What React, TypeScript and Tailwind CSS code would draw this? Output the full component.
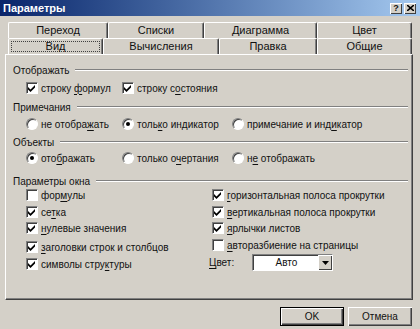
import React from "react";

const font = { fontFamily: '"Liberation Sans", Arial, sans-serif' };

function Label({ text, u }: { text: string; u?: number }) {
  if (u === undefined) return <span>{text}</span>;
  return (
    <span className="whitespace-nowrap">
      {text.slice(0, u)}
      <span className="underline underline-offset-[2px]">{text[u]}</span>
      {text.slice(u + 1)}
    </span>
  );
}

function Check({ on, text, u, className = "" }: { on?: boolean; text: string; u?: number; className?: string }) {
  return (
    <div className={`flex items-center gap-[3px] ${className}`}>
      <div className="w-[12px] h-[12px] shrink-0 border border-t-[#808080] border-l-[#808080] border-r-white border-b-white bg-white shadow-[inset_1px_1px_0_#404040] flex items-center justify-center">
        {on && (
          <svg width="8" height="8" viewBox="0 0 8 8">
            <path d="M0 3 L2.5 5.5 L7 1 L7 3.5 L2.5 8 L0 5.5 Z" fill="#000" />
          </svg>
        )}
      </div>
      <Label text={text} u={u} />
    </div>
  );
}

function Radio({ on, text, u, className = "" }: { on?: boolean; text: string; u?: number; className?: string }) {
  return (
    <div className={`flex items-center gap-[3px] ${className}`}>
      <div className="w-[12px] h-[12px] shrink-0 rounded-full border border-t-[#808080] border-l-[#808080] border-r-white border-b-white bg-white shadow-[inset_1px_1px_0_#404040] flex items-center justify-center">
        {on && <div className="w-[4px] h-[4px] rounded-full bg-black" />}
      </div>
      <Label text={text} u={u} />
    </div>
  );
}

function Heading({ text, className = "" }: { text: string; className?: string }) {
  return (
    <div className={`flex items-center h-[14px] pl-[7px] pr-[4px] ${className}`}>
      <span>{text}</span>
      <div className="flex-1 h-0 ml-[6px] border-t border-t-[#808080] border-b border-b-white" />
    </div>
  );
}

function Tab({ text, w, selected }: { text: string; w: string; selected?: boolean }) {
  return (
    <div
      className={`${w} h-full flex items-center justify-center rounded-t-[2px] border-t border-l border-t-white border-l-white border-r border-r-[#404040] shadow-[inset_-1px_0_0_#808080] ${selected ? "p-[2px]" : ""}`}
    >
      {selected ? (
        <div className="w-full h-full flex items-center justify-center border border-dotted border-[#404040]">{text}</div>
      ) : (
        text
      )}
    </div>
  );
}

function Button({ text, primary }: { text: string; primary?: boolean }) {
  return (
    <div
      className={`w-[64px] h-[19px] flex items-center justify-center ${
        primary
          ? "border border-black shadow-[inset_1px_1px_0_#fff,inset_-1px_-1px_0_#404040,inset_-2px_-2px_0_#808080]"
          : "shadow-[inset_1px_1px_0_#fff,inset_-1px_-1px_0_#404040,inset_-2px_-2px_0_#808080]"
      }`}
    >
      {text}
    </div>
  );
}

export default function App() {
  return (
    <div className="w-[420px] h-[329px] bg-[#d4d0c8] text-[10px] text-[#111] overflow-hidden" style={font}>
      {/* Title bar */}
      <div className="h-[16px] flex items-center justify-between pl-[3px] pr-[4px] bg-gradient-to-r from-[#0a246a] to-[#a6caf0]">
        <span className="text-white font-bold text-[11px]">Параметры</span>
        <div className="flex gap-[2px]">
          <div className="w-[12px] h-[11px] bg-[#d4d0c8] flex items-center justify-center text-[9px] font-bold leading-none shadow-[inset_1px_1px_0_#fff,inset_-1px_-1px_0_#404040]">
            ?
          </div>
          <div className="w-[12px] h-[11px] bg-[#d4d0c8] flex items-center justify-center shadow-[inset_1px_1px_0_#fff,inset_-1px_-1px_0_#404040]">
            <svg width="7" height="6" viewBox="0 0 7 6">
              <path d="M0 0 L7 6 M7 0 L0 6" stroke="#000" strokeWidth="1.6" />
            </svg>
          </div>
        </div>
      </div>

      {/* Tabs */}
      <div className="mt-[6px] ml-[8px] text-[11px]">
        <div className="flex h-[16px]">
          <Tab text="Переход" w="w-[100px]" />
          <Tab text="Списки" w="w-[96px]" />
          <Tab text="Диаграмма" w="w-[113px]" />
          <Tab text="Цвет" w="w-[95px]" />
        </div>
        <div className="flex h-[16px]">
          <Tab text="Вид" w="w-[95px]" selected />
          <Tab text="Вычисления" w="w-[116px]" />
          <Tab text="Правка" w="w-[98px]" />
          <Tab text="Общие" w="w-[95px]" />
        </div>
      </div>

      {/* Panel */}
      <div className="ml-[5px] w-[408px] h-[246px] border-t border-l border-t-white border-l-white border-r border-b border-r-[#404040] border-b-[#404040] shadow-[inset_-1px_-1px_0_#808080] pt-[8px]">
        <Heading text="Отображать" />
        <div className="flex h-[14px] mt-[4px] pl-[20px]">
          <Check on text="строку формул" u={7} className="w-[96px]" />
          <Check on text="строку состояния" u={8} />
        </div>

        <Heading text="Примечания" className="mt-[5px]" />
        <div className="flex h-[14px] mt-[3px] pl-[20px]">
          <Radio text="не отображать" u={9} className="w-[96px]" />
          <Radio on text="только индикатор" u={4} className="w-[110px]" />
          <Radio text="примечание и индикатор" u={16} />
        </div>

        <Heading text="Объекты" className="mt-[4px]" />
        <div className="flex h-[14px] mt-[2px] pl-[20px]">
          <Radio on text="отображать" u={3} className="w-[96px]" />
          <Radio text="только очертания" u={8} className="w-[110px]" />
          <Radio text="не отображать" u={1} />
        </div>

        <Heading text="Параметры окна" className="mt-[9px]" />
        <div className="grid grid-cols-[186px_1fr] pl-[20px]">
          <div className="flex flex-col">
            <Check text="формулы" u={3} className="h-[14px]" />
            <Check on text="сетка" u={2} className="h-[14px] mt-[3px]" />
            <Check on text="нулевые значения" u={0} className="h-[14px] mt-[2px]" />
            <Check on text="заголовки строк и столбцов" u={0} className="h-[14px] mt-[5px]" />
            <Check on text="символы структуры" u={12} className="h-[14px] mt-[3px]" />
          </div>
          <div className="flex flex-col">
            <Check on text="горизонтальная полоса прокрутки" u={0} className="h-[14px]" />
            <Check on text="вертикальная полоса прокрутки" u={0} className="h-[14px] mt-[3px]" />
            <Check on text="ярлычки листов" u={0} className="h-[14px] mt-[2px]" />
            <Check text="авторазбиение на страницы" u={0} className="h-[14px] mt-[3px]" />
            <div className="flex items-center h-[17px] mt-[2px] -ml-[3px]">
              <span className="w-[43px]">
                <Label text="Цвет:" u={0} />
              </span>
              <div className="w-[81px] h-[17px] flex bg-white border border-t-[#808080] border-l-[#808080] border-r-white border-b-white shadow-[inset_1px_1px_0_#404040]">
                <div className="flex-1 flex items-center justify-center pl-[2px]">Авто</div>
                <div className="w-[14px] h-full bg-[#d4d0c8] flex items-center justify-center shadow-[inset_1px_1px_0_#fff,inset_-1px_-1px_0_#404040]">
                  <svg width="7" height="4" viewBox="0 0 7 4">
                    <path d="M0 0 L7 0 L3.5 4 Z" fill="#000" />
                  </svg>
                </div>
              </div>
            </div>
          </div>
        </div>
      </div>

      {/* Buttons */}
      <div className="flex justify-end gap-[4px] mt-[7px] pr-[8px]">
        <Button text="OK" primary />
        <Button text="Отмена" />
      </div>
    </div>
  );
}
